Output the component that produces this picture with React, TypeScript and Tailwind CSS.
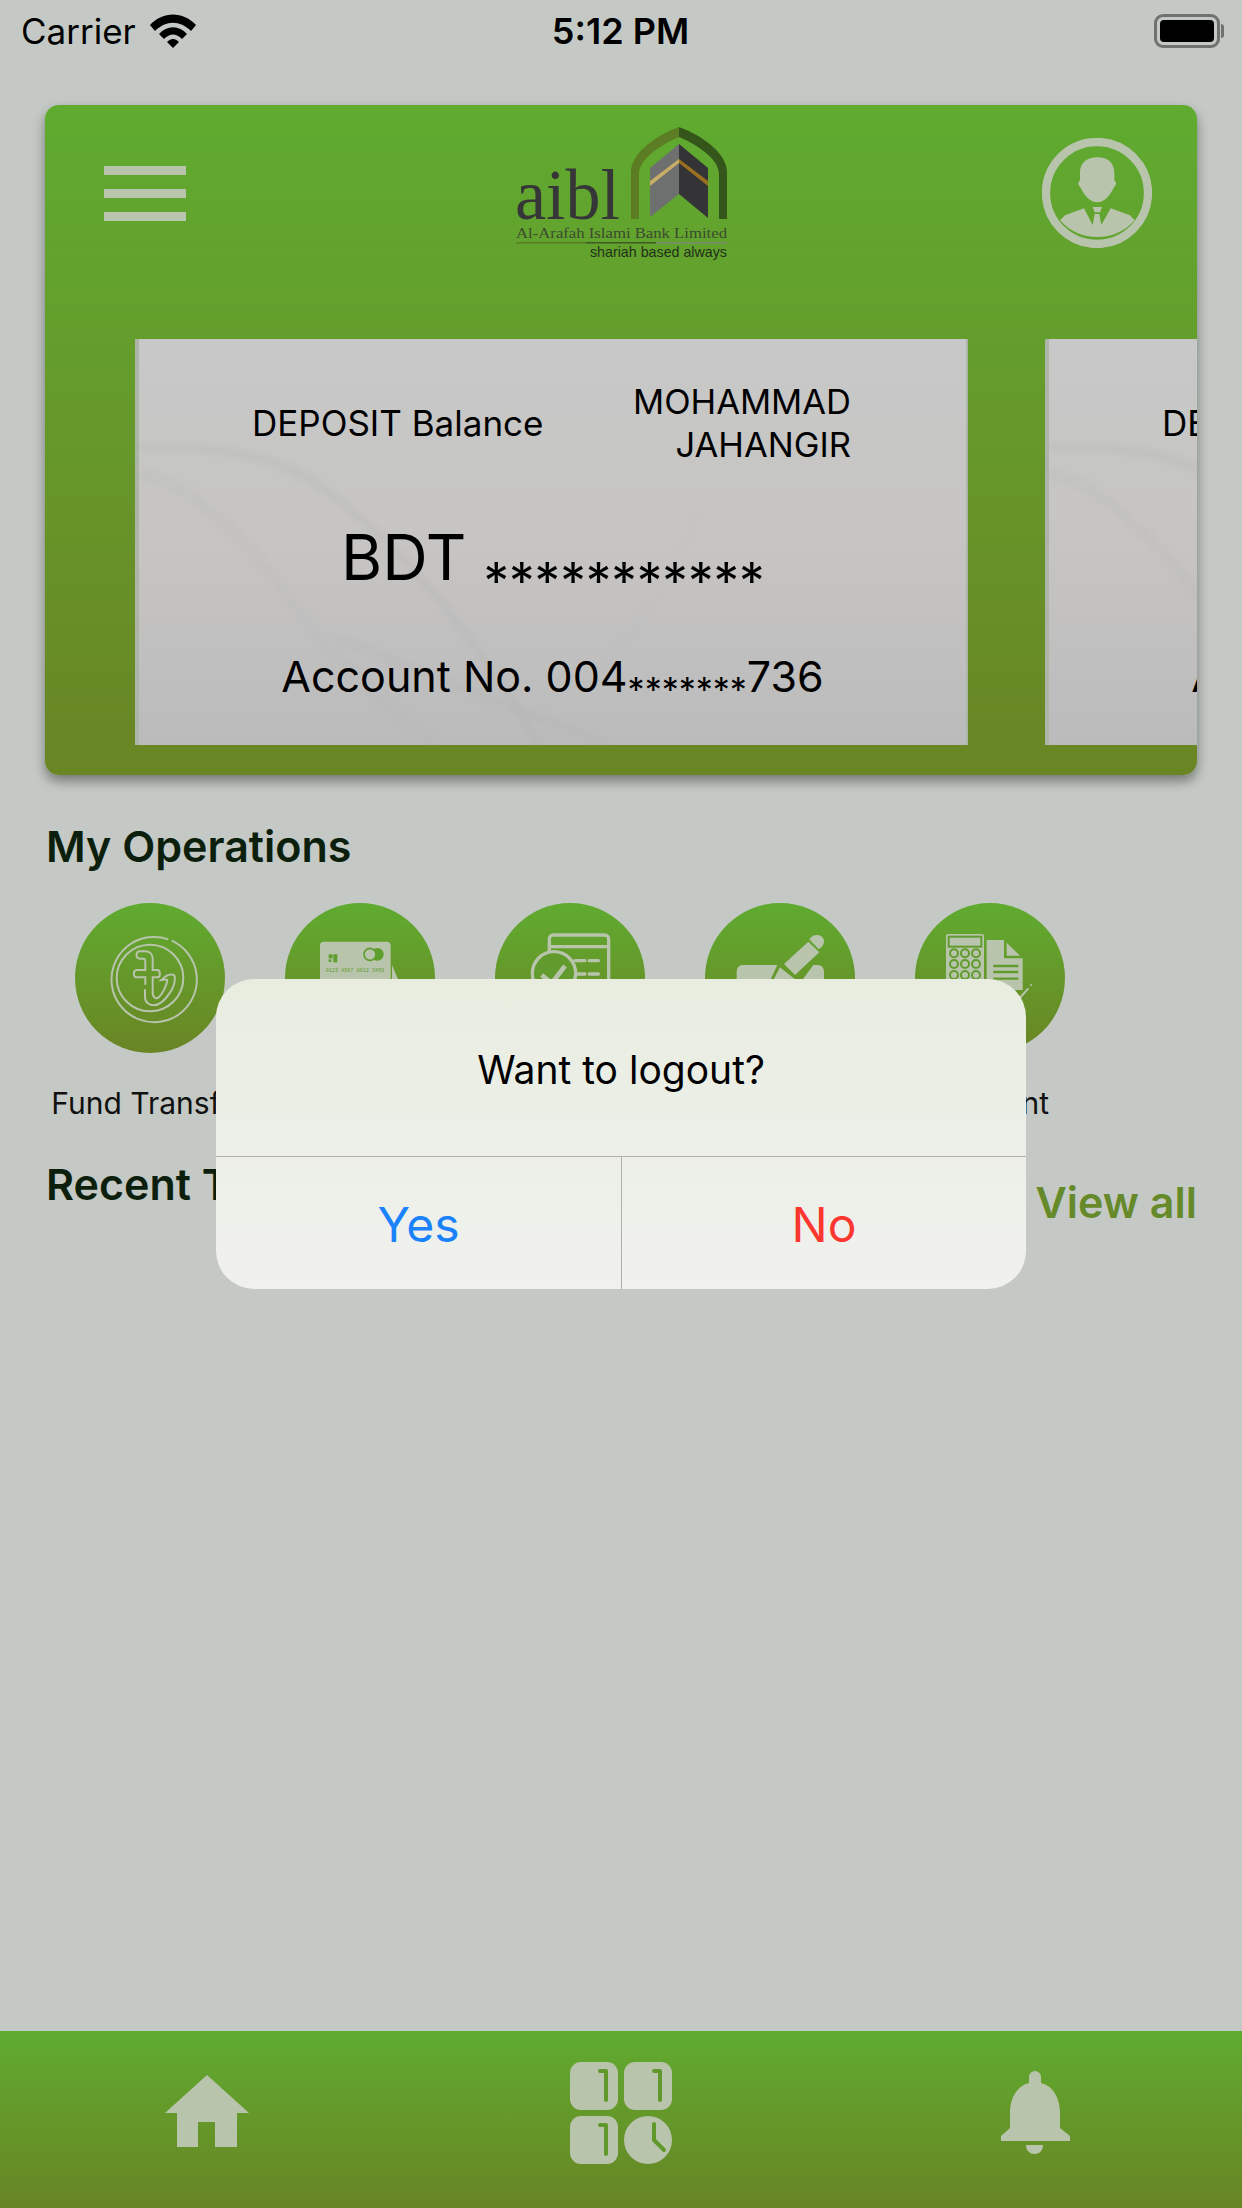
const ICON = '#b8c4ac';

function StatusBar() {
  return (
    <div className="grid h-[62px] grid-cols-3 items-center pl-[21px] pr-[18px] text-[35px] text-black">
      <div className="flex items-center gap-[14px]">
        <span>Carrier</span>
        <svg width="46" height="34" viewBox="0 0 46 34">
          <path d="M0 11 C13 -3 33 -3 46 11 L41 17 C30 6 16 6 5 17Z" fill="#000" />
          <path d="M9 20 C17 11 29 11 37 20 L32 25 C26 19 20 19 14 25Z" fill="#000" />
          <path d="M17 28 C21 24 25 24 29 28 L23 34Z" fill="#000" />
        </svg>
      </div>
      <div className="-translate-x-[2px] text-center text-[36px] font-semibold">5:12 PM</div>
      <div className="flex items-center justify-end">
        <div className="flex h-[34px] w-[66px] items-center justify-center rounded-[9px] border-[3px] border-[#6f726f]">
          <div className="h-[22px] w-[54px] rounded-[4px] bg-black" />
        </div>
        <div className="ml-[1px] h-[14px] w-[3px] rounded-r-[3px] bg-[#6f726f]" />
      </div>
    </div>
  );
}

function Logo() {
  return (
    <svg width="280" height="160" viewBox="0 0 280 160" className="mt-[5px] ml-[294px] flex-none">
      <path d="M151 109 V62 C151 45 172 27 199 17 V27 C178 36 159 50 159 64 V109Z" fill="#5d7d24" />
      <path d="M247 109 V62 C247 45 226 27 199 17 V27 C220 36 239 50 239 64 V109Z" fill="#34561b" />
      <path d="M199 34 L170 58 V107 L199 84Z" fill="#6e7070" />
      <path d="M199 34 L228 58 V108 L199 84Z" fill="#343436" />
      <path d="M170 71 L199 49 V53 L170 76Z" fill="#c8ad66" />
      <path d="M199 49 L228 71 V76 L199 53Z" fill="#9a7020" />
      <text x="35" y="109" fontFamily="'Liberation Serif', serif" fontSize="72" textLength="105" lengthAdjust="spacingAndGlyphs" fill="#363638">aibl</text>
      <text x="36" y="128" fontFamily="'Liberation Serif', serif" fontSize="15.5" textLength="211" lengthAdjust="spacingAndGlyphs" fill="#3c4a2e">Al-Arafah Islami Bank Limited</text>
      <rect x="36" y="132" width="70" height="1.5" fill="#5d7d24" />
      <rect x="106" y="132" width="70" height="1.5" fill="#3c5a25" />
      <rect x="176" y="132" width="71" height="1.5" fill="#7a8a70" />
      <text x="110" y="147" fontFamily="'Liberation Sans', sans-serif" fontSize="15" textLength="137" lengthAdjust="spacingAndGlyphs" fill="#22301a">shariah based always</text>
    </svg>
  );
}

function Avatar() {
  return (
    <svg width="110" height="110" viewBox="66 55 330 330" className="mt-[33px] ml-auto flex-none">
      <circle cx="231" cy="220" r="153" fill="none" stroke={ICON} strokeWidth="25" />
      <path d="M232 113 C200 113 180 130 180 160 V180 L174 192 L184 208 C195 230 212 248 232 248 C252 248 268 230 279 208 L289 192 L283 180 V160 C283 130 264 113 232 113Z" fill={ICON} />
      <path d="M120 302 L135 287 L192 266 L218 316 L224 283 H238 L244 316 L272 266 L330 287 L344 302 A150 150 0 0 1 120 302Z" fill={ICON} />
      <path d="M218 262 H246 L240 278 H224Z" fill={ICON} />
    </svg>
  );
}

function AccountCard() {
  return (
    <div className="relative h-[406px] w-[833px] flex-none overflow-hidden border-r-[2px] border-l-[4px] border-[#adb5a8] bg-gradient-to-b from-[#c8c8c8] via-[#c6c5c3] to-[#bcbbbc] text-black">
      <svg className="absolute inset-0 blur-[3px]" width="833" height="406" viewBox="0 0 833 406" fill="none">
        <path d="M0 108 C60 108 120 110 170 140 C240 185 320 270 400 406" stroke="#b2b2b2" strokeOpacity="0.35" strokeWidth="6" />
        <path d="M0 134 C70 150 130 230 190 310 C240 360 270 390 300 406" stroke="#b2b2b2" strokeOpacity="0.2" strokeWidth="10" />
        <path d="M200 300 C300 340 400 380 470 406" stroke="#aaaaaa" strokeOpacity="0.2" strokeWidth="6" />
        <path d="M560 170 C540 230 500 290 460 330" stroke="#b8b8b8" strokeOpacity="0.15" strokeWidth="4" />
      </svg>
      <div className="relative flex flex-col">
        <div className="flex items-center justify-between pt-[41px] pr-[115px] pl-[113px] leading-[43px]">
          <span className="text-[35px]">DEPOSIT Balance</span>
          <span className="text-right text-[34.5px]">MOHAMMAD<br />JAHANGIR</span>
        </div>
        <div className="mt-[60px] flex items-baseline gap-[17px] pl-[202px] leading-[63px]">
          <span className="text-[63px]">BDT</span>
          <span className="translate-y-[19px] text-[51px]">***********</span>
        </div>
        <div className="mt-[58px] text-center text-[43px] leading-[50px]">
          Account No. 004<span className="inline-block translate-y-[10px] text-[34px] leading-[34px]">*******</span>736
        </div>
      </div>
    </div>
  );
}

function FundIcon() {
  return (
    <svg width="150" height="150" viewBox="45 39 450 450" fill="none" stroke={ICON} strokeWidth="6">
      <path d="M335 152 A128 128 0 1 1 325 148" />
      <circle cx="270" cy="264" r="100" />
      <path d="M255 300 V322 C255 338 268 346 282 346 C300 346 318 326 330 308 C342 290 346 272 344 258 C342 252 330 252 318 258 L304 270 C318 268 322 268 322 272 C320 285 308 312 296 322 C288 328 278 322 278 310 V262 H292 C302 262 302 240 292 240 H278 V206 C278 192 268 184 256 184 H240 C226 184 226 206 240 206 H250 C256 206 256 212 256 216 V240 H232 C218 240 218 262 232 262 H256 V282" strokeLinecap="round" />
    </svg>
  );
}

function CardIcon() {
  return (
    <svg width="150" height="150" viewBox="45 39 450 450">
      <rect x="150" y="155" width="212" height="200" rx="12" fill={ICON} />
      <path d="M366 225 L385 270 H366Z" fill={ICON} />
      <rect x="176" y="193" width="12" height="12" fill="#5f9f2e" />
      <rect x="190" y="193" width="12" height="24" fill="#5f9f2e" />
      <rect x="176" y="208" width="8" height="8" fill="#5f9f2e" />
      <circle cx="322" cy="193" r="19" fill="#5f9f2e" />
      <circle cx="300" cy="193" r="18" fill={ICON} stroke="#5f9f2e" strokeWidth="5" />
      <text x="167" y="247" fontFamily="'Liberation Mono', monospace" fontSize="14" fill="#5f9f2e" textLength="176" lengthAdjust="spacingAndGlyphs">0123 4567 8912 3456</text>
    </svg>
  );
}

function BillIcon() {
  return (
    <svg width="150" height="150" viewBox="675 39 450 450" fill="none" stroke={ICON}>
      <rect x="838" y="135" width="178" height="220" rx="12" strokeWidth="10" />
      <path d="M838 170 H1016" strokeWidth="10" />
      <path d="M915 212 H945 M958 212 H985 M915 252 H945 M958 252 H985" strokeWidth="10" strokeLinecap="round" />
      <circle cx="852" cy="250" r="65" fill="#629b2d" strokeWidth="10" />
      <path d="M815 255 L845 280 L885 228" strokeWidth="14" strokeLinejoin="round" />
    </svg>
  );
}

function PenIcon() {
  return (
    <svg width="150" height="150" viewBox="75 39 450 450" fill={ICON}>
      <path d="M312 222 L385 155 L418 187 L345 255Z" />
      <path d="M388 148 C400 128 432 132 432 155 C432 165 425 172 416 178Z" />
      <path d="M190 225 H292 L262 290 H170 V245 C170 233 178 225 190 225Z" />
      <path d="M300 232 L345 268 L290 295 L275 280Z" />
      <path d="M400 225 H412 C424 225 432 233 432 245 V300 H345Z" />
    </svg>
  );
}

function AccountIcon() {
  const green = '#629b2d';
  return (
    <svg width="150" height="150" viewBox="705 39 450 450">
      <rect x="798" y="132" width="114" height="210" rx="6" fill={ICON} />
      <rect x="806" y="140" width="98" height="30" fill={ICON} stroke={green} strokeWidth="6" />
      {[190, 222, 255].map((cy) =>
        [822, 855, 888].map((cx) => (
          <circle key={`${cx}-${cy}`} cx={cx} cy={cy} r="12" fill={ICON} stroke={green} strokeWidth="6" />
        ))
      )}
      <path d="M920 150 H972 V205 H1028 V300 H920Z" fill={ICON} />
      <path d="M980 158 L1020 197 H980Z" fill={ICON} />
      <path d="M940 228 H1015 M940 246 H1015 M940 266 H1015" stroke={green} strokeWidth="7" />
      <path d="M1014 330 L1045 295" stroke={ICON} strokeWidth="6" />
      <circle cx="1053" cy="285" r="3" fill={ICON} />
    </svg>
  );
}

function HomeIcon() {
  return (
    <svg width="84" height="72" viewBox="0 0 84 72" fill={ICON} className="-mt-[4px]">
      <path d="M42 0 L84 38 H72 V72 H50 V47 H33 V72 H12 V38 H0Z" />
    </svg>
  );
}

function GridIcon() {
  const cut = '#61982c';
  return (
    <svg width="102" height="102" viewBox="0 0 102 102" fill="none">
      <rect width="48" height="48" rx="11" fill={ICON} />
      <rect x="54" width="48" height="48" rx="11" fill={ICON} />
      <rect y="54" width="48" height="48" rx="11" fill={ICON} />
      <circle cx="78" cy="78" r="24" fill={ICON} />
      <path d="M30 9 H36 V38" stroke={cut} strokeWidth="4" strokeLinecap="round" strokeLinejoin="round" />
      <path d="M84 9 H90 V38" stroke={cut} strokeWidth="4" strokeLinecap="round" strokeLinejoin="round" />
      <path d="M30 63 H36 V92" stroke={cut} strokeWidth="4" strokeLinecap="round" strokeLinejoin="round" />
      <path d="M84 62 V78 L94 88" stroke={cut} strokeWidth="4" strokeLinecap="round" strokeLinejoin="round" />
    </svg>
  );
}

function BellIcon() {
  return (
    <svg width="69" height="83" viewBox="0 0 69 83" fill={ICON}>
      <path d="M28 12 V6 A6 6 0 0 1 40 6 V12 C52 15 59 27 59 42 V57 L69 65 V70 H0 V65 L9 57 V42 C9 27 16 15 28 12Z" />
      <path d="M25 74 H42 C42 80 38 83 33.5 83 C29 83 25 80 25 74Z" />
    </svg>
  );
}

const operations = [
  { icon: <FundIcon />, label: 'Fund Transfer' },
  { icon: <CardIcon />, label: '' },
  { icon: <BillIcon />, label: '' },
  { icon: <PenIcon />, label: '' },
  { icon: <AccountIcon />, label: 'Account' },
];

export default function App() {
  return (
    <div className="relative flex h-[2208px] w-[1242px] flex-col overflow-hidden bg-[#c4c9c5] font-['Inter',sans-serif]">
      <StatusBar />

      <div className="mx-[45px] mt-[43px] h-[670px] flex-none overflow-hidden rounded-[14px] bg-gradient-to-b from-[#5fab30] to-[#698524] shadow-[0_6px_12px_rgba(0,0,0,0.4)]">
        <div className="flex h-[234px] items-start pr-[45px] pl-[59px]">
          <div className="mt-[61px] flex w-[82px] flex-none flex-col gap-[14px]">
            <div className="h-[9px] bg-[#b8c4ac]" />
            <div className="h-[9px] bg-[#b8c4ac]" />
            <div className="h-[9px] bg-[#b8c4ac]" />
          </div>
          <Logo />
          <Avatar />
        </div>
        <div className="flex gap-[77px] pl-[90px]">
          <AccountCard />
          <AccountCard />
        </div>
      </div>

      <div className="mt-[46px] px-[46px] text-[43px] leading-[50px] font-semibold text-[#0c1f0c]">My Operations</div>

      <div className="mt-[32px] flex px-[45px]">
        {operations.map((op, i) => (
          <div key={i} className="flex w-[210px] flex-col items-center">
            <div className="h-[150px] w-[150px] overflow-hidden rounded-full bg-gradient-to-b from-[#5fab30] to-[#698524]">
              {op.icon}
            </div>
            <div className="mt-[32px] h-[36px] text-[30px] leading-[36px] whitespace-nowrap text-[#111]">{op.label}</div>
          </div>
        ))}
      </div>

      <div className="mt-[38px] flex items-start justify-between px-[45px] text-[43px] leading-[50px] font-semibold">
        <span className="ml-[1px] text-[#0c1f0c]">Recent Transactions</span>
        <span className="mt-[18px] text-[#668a2a]">View all</span>
      </div>

      <div className="mt-auto grid h-[177px] grid-cols-3 items-center justify-items-center bg-gradient-to-b from-[#5fab30] to-[#678524] pb-[14px]">
        <HomeIcon />
        <GridIcon />
        <BellIcon />
      </div>

      {/* logout alert */}
      <div className="absolute top-[979px] left-[216px] flex h-[310px] w-[810px] flex-col overflow-hidden rounded-[38px] bg-gradient-to-b from-[#e8ede0] to-[#f0f1ee]">
        <div className="flex h-[178px] items-center justify-center border-b border-[#aeb0ab] pt-[6px] text-[39px] text-black">
          Want to logout?
        </div>
        <div className="grid flex-1 grid-cols-[406px_1fr] text-[48px]">
          <div className="flex items-center justify-center border-r border-[#aeb0ab] pt-[4px] text-[#1a82fb]">Yes</div>
          <div className="flex items-center justify-center pt-[4px] text-[#fb3730]">No</div>
        </div>
      </div>
    </div>
  );
}
